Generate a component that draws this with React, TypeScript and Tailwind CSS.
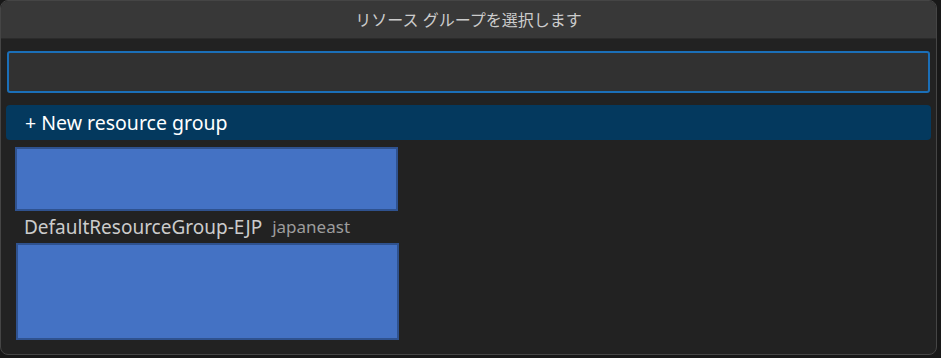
const items = [
  { name: "DefaultResourceGroup-EJP", location: "japaneast" },
];

const Redacted = ({ h }: { h: string }) => (
  <div className={`w-[383px] ${h} bg-[#4472c4] border-2 border-[#2f528f]`} />
);

export default function App() {
  return (
    <div className="w-[941px] h-[358px] bg-[#181818] overflow-hidden font-['Noto_Sans','Noto_Sans_CJK_JP',sans-serif]">
      <div className="w-[937px] h-[355px] bg-[#222222] border border-[#454545] rounded-lg overflow-hidden flex flex-col">
        {/* Title */}
        <div className="h-[38px] bg-[#383838] flex items-center justify-center text-[#cccccc] text-[16px] border-b border-[#2b2b2b]">
          リソース グループを選択します
        </div>

        {/* Search box */}
        <div className="px-[6px] pt-[12px]">
          <div className="h-[42px] bg-[#313131] border-2 border-[#1b6fb8] rounded-[3px]" />
        </div>

        {/* List */}
        <div className="px-[5px] pt-[12px] flex flex-col">
          <div className="h-[35px] bg-[#04395e] rounded-[4px] flex items-center pl-[19px] text-white text-[19.5px]">
            + New resource group
          </div>

          <div className="pl-[9px] pt-[7px]">
            <Redacted h="h-[64px]" />
          </div>

          {items.map((it) => (
            <div key={it.name} className="h-[32px] flex items-center pl-[18px] gap-[10px]">
              <span className="text-[#cccccc] text-[19px]">{it.name}</span>
              <span className="text-[#9d9d9d] text-[17px]">{it.location}</span>
            </div>
          ))}

          <div className="pl-[10px]">
            <Redacted h="h-[97px]" />
          </div>
        </div>
      </div>
    </div>
  );
}
